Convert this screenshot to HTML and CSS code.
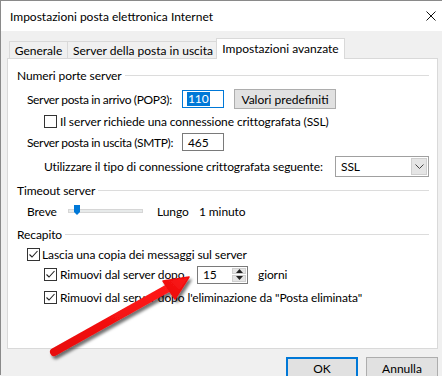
FILE: index.html
```html
<!DOCTYPE html>
<html lang="it">
<head>
  <meta charset="UTF-8" />
  <title>Impostazioni posta elettronica Internet</title>
  <link rel="stylesheet" href="styles.css">
</head>
<body>

  <div class="window">
    <div class="titlebar">
      <span class="title">Impostazioni posta elettronica Internet</span>
      <svg class="close" width="10" height="10" viewBox="0 0 10 10">
        <path d="M0.5 0.5L9.5 9.5M9.5 0.5L0.5 9.5" stroke="#111" stroke-width="1" fill="none"/>
      </svg>
    </div>

    <div class="client">
      <div class="tabs">
        <div class="tab tab-general">Generale</div>
        <div class="tab tab-out">Server della posta in uscita</div>
        <div class="tab active">Impostazioni avanzate</div>
      </div>

      <div class="panel">
        <div class="group-head head-ports"><span>Numeri porte server</span><i></i></div>

        <div class="row row-pop ind1">
          <span class="port-label">Server posta in arrivo (POP3):</span>
          <span class="field focused"><span class="selected">110</span></span>
          <button class="btn">Valori predefiniti</button>
        </div>

        <div class="row row-ssl ind2">
          <span class="check"></span>
          <span class="check-text">Il server richiede una connessione crittografata (SSL)</span>
        </div>

        <div class="row row-smtp ind1">
          <span class="port-label">Server posta in uscita (SMTP):</span>
          <span class="field">465</span>
        </div>

        <div class="row row-enc ind2">
          <span>Utilizzare il tipo di connessione crittografata seguente:</span>
          <div class="combo">
            <span class="combo-value">SSL</span>
            <span class="combo-btn">
              <svg width="9" height="5" viewBox="0 0 9 5"><path d="M0.5 0.5L4.5 4.5L8.5 0.5" stroke="#444" fill="none"/></svg>
            </span>
          </div>
        </div>

        <div class="group-head head-timeout"><span>Timeout server</span><i></i></div>

        <div class="row row-slider ind1">
          <span class="slider-min">Breve</span>
          <span class="track">
            <svg class="thumb" width="6" height="10" viewBox="0 0 6 10"><path d="M0 0H6V7L3 10L0 7Z" fill="#0078d7"/></svg>
          </span>
          <span class="slider-max">Lungo</span>
          <span>1 minuto</span>
        </div>

        <div class="group-head head-delivery"><span>Recapito</span><i></i></div>

        <div class="row row-keep ind1">
          <span class="check checked">
            <svg width="11" height="11" viewBox="0 0 11 11"><path d="M1.5 5.5L4 8L9.5 2" stroke="#222" stroke-width="1.1" fill="none"/></svg>
          </span>
          <span class="check-text tight">Lascia una copia dei messaggi sul server</span>
        </div>

        <div class="row row-remove ind2">
          <span class="remove-label">
            <span class="check checked">
              <svg width="11" height="11" viewBox="0 0 11 11"><path d="M1.5 5.5L4 8L9.5 2" stroke="#222" stroke-width="1.1" fill="none"/></svg>
            </span>
            <span class="check-text">Rimuovi dal server dopo</span>
          </span>
          <span class="spin">
            <span class="spin-value">15</span>
            <span class="spin-btns">
              <span class="spin-up"><svg width="7" height="4" viewBox="0 0 7 4"><path d="M0 4L3.5 0L7 4Z" fill="#222"/></svg></span>
              <span class="spin-down"><svg width="7" height="4" viewBox="0 0 7 4"><path d="M0 0L3.5 4L7 0Z" fill="#222"/></svg></span>
            </span>
          </span>
          <span class="days">giorni</span>
        </div>

        <div class="row row-remove2 ind2">
          <span class="check checked">
            <svg width="11" height="11" viewBox="0 0 11 11"><path d="M1.5 5.5L4 8L9.5 2" stroke="#222" stroke-width="1.1" fill="none"/></svg>
          </span>
          <span class="check-text">Rimuovi dal server dopo l'eliminazione da "Posta eliminata"</span>
        </div>
      </div>

      <div class="footer">
        <button class="btn dlg default">OK</button>
        <button class="btn dlg">Annulla</button>
      </div>
    </div>
  </div>

  <!-- red annotation arrow drawn over the dialog -->
  <svg class="arrow" width="442" height="376" viewBox="0 0 442 376">
    <defs>
      <filter id="shadow" x="-20%" y="-20%" width="140%" height="140%">
        <feDropShadow dx="2" dy="3" stdDeviation="1.6" flood-color="#000" flood-opacity="0.55"/>
      </filter>
      <linearGradient id="red" x1="0" y1="1" x2="1" y2="0">
        <stop offset="0" stop-color="#e80808"/>
        <stop offset="1" stop-color="#ff1a1a"/>
      </linearGradient>
    </defs>
    <g filter="url(#shadow)">
      <line x1="54" y1="352" x2="170" y2="287" stroke="url(#red)" stroke-width="8" stroke-linecap="round"/>
      <path d="M189 277L163 281L175 299Z" fill="url(#red)" stroke="#f01010" stroke-width="1.5" stroke-linejoin="round"/>
    </g>
  </svg>

</body>
</html>
```

FILE: styles.css
```css
body {
  margin: 0;
  background: #f0f0f0;
  font-family: 'Lato', 'Noto Sans', sans-serif;
  font-size: 12px;
  color: #000;
  white-space: nowrap;
  position: relative;
  width: 442px;
  height: 376px;
  overflow: hidden;
}

.window {
  border-top: 1px solid #8a8a8a;
  border-left: 1px solid #8a8a8a;
  height: 375px;
  box-sizing: border-box;
}

.titlebar {
  height: 30px;
  background: #fff;
  display: flex;
  align-items: center;
  justify-content: space-between;
  padding: 0 6px 0 9px;
}

.client {
  padding-left: 6px;
}

.tabs {
  display: flex;
  align-items: flex-end;
  height: 27px;
  padding-left: 2px;
}

.tab {
  box-sizing: border-box;
  height: 17px;
  border: 1px solid #d9d9d9;
  border-bottom: none;
  background: #f0f0f0;
  display: flex;
  align-items: center;
  justify-content: center;
  padding-top: 1px;
}

.tab-general {
  width: 59px;
}

.tab-out {
  width: 152px;
  margin-left: -1px;
}

.tab.active {
  width: 129px;
  height: 21px;
  margin-left: -3px;
  margin-bottom: -1px;
  background: #fff;
  position: relative;
  padding-top: 0;
  padding-bottom: 2px;
}

.panel {
  box-sizing: border-box;
  width: 431px;
  height: 291px;
  background: #fff;
  border: 1px solid #d9d9d9;
  padding: 8px 8px 0 9px;
  letter-spacing: -0.1px;
}

.group-head {
  display: flex;
  align-items: center;
  height: 16px;
}

.group-head i {
  flex: 1;
  height: 1px;
  background: #dcdcdc;
  margin-left: 3px;
}

.head-timeout { margin-top: 5px; }
.head-delivery { margin-top: 7px; }

.row {
  display: flex;
  align-items: center;
  height: 16px;
}

.ind1 { padding-left: 10px; }
.ind2 { padding-left: 27px; }

.row-pop { height: 20px; margin-top: 6px; }
.row-ssl { height: 18px; margin-top: 3px; }
.row-smtp { height: 18px; margin-top: 3px; }
.row-enc { height: 22px; margin-top: 4px; }
.row-slider { margin-top: 5px; }
.row-keep { margin-top: 4px; }
.row-remove { height: 19px; margin-top: 3px; }
.row-remove2 { margin-top: 5px; }

.port-label {
  width: 155px;
  letter-spacing: -0.35px;
}

.field {
  box-sizing: border-box;
  width: 42px;
  height: 18px;
  border: 1px solid #7a7a7a;
  background: #fff;
  display: flex;
  align-items: center;
  padding-left: 5px;
}

.field.focused {
  border-color: #0078d7;
  padding-left: 4px;
}

.selected {
  background: #0078d7;
  color: #fff;
  padding: 0 1px;
  line-height: 14px;
}

.btn {
  box-sizing: border-box;
  font: inherit;
  color: #000;
  background: #e1e1e1;
  border: 1px solid #adadad;
  padding: 0;
}

.row-pop .btn {
  width: 102px;
  height: 20px;
  margin-left: 10px;
}

.check {
  box-sizing: border-box;
  width: 13px;
  height: 13px;
  border: 1px solid #333;
  background: #fff;
  display: flex;
  align-items: center;
  justify-content: center;
  flex-shrink: 0;
}

.check-text {
  margin-left: 3px;
}

.check-text.tight {
  margin-left: 2px;
}

.combo {
  box-sizing: border-box;
  width: 94px;
  height: 21px;
  margin-left: auto;
  border: 1px solid #a0a0a0;
  background: #fff;
  display: flex;
  padding: 1px;
}

.combo-value {
  flex: 1;
  padding-left: 4px;
  display: flex;
  align-items: center;
}

.combo-btn {
  box-sizing: border-box;
  width: 16px;
  background: #e5e5e5;
  border: 1px solid #cfcfcf;
  display: flex;
  align-items: center;
  justify-content: center;
}

.slider-min {
  width: 41px;
}

.track {
  box-sizing: border-box;
  width: 75px;
  height: 4px;
  background: #e7eaea;
  border: 1px solid #d6d6d6;
  position: relative;
}

.thumb {
  position: absolute;
  left: 5px;
  top: -5px;
}

.slider-max {
  margin-left: 14px;
  width: 42px;
}

.remove-label {
  display: flex;
  align-items: center;
  width: 153px;
}

.spin {
  box-sizing: border-box;
  width: 51px;
  height: 18px;
  border: 1px solid #7a7a7a;
  background: #fff;
  display: flex;
  padding: 1px 1px 1px 0;
}

.spin-value {
  flex: 1;
  padding-left: 5px;
  display: flex;
  align-items: center;
}

.spin-btns {
  width: 14px;
  display: flex;
  flex-direction: column;
  gap: 1px;
  background: #fff;
}

.spin-up,
.spin-down {
  flex: 1;
  background: #e5e5e5;
  border: 1px solid #cfcfcf;
  display: flex;
  align-items: center;
  justify-content: center;
}

.days {
  margin-left: 10px;
}

.footer {
  width: 431px;
  display: flex;
  justify-content: flex-end;
  gap: 8px;
  margin-top: 8px;
}

.btn.dlg {
  width: 72px;
  height: 23px;
}

.btn.default {
  border: 2px solid #0078d7;
}

.arrow {
  position: absolute;
  left: 0;
  top: 0;
  pointer-events: none;
}
```
